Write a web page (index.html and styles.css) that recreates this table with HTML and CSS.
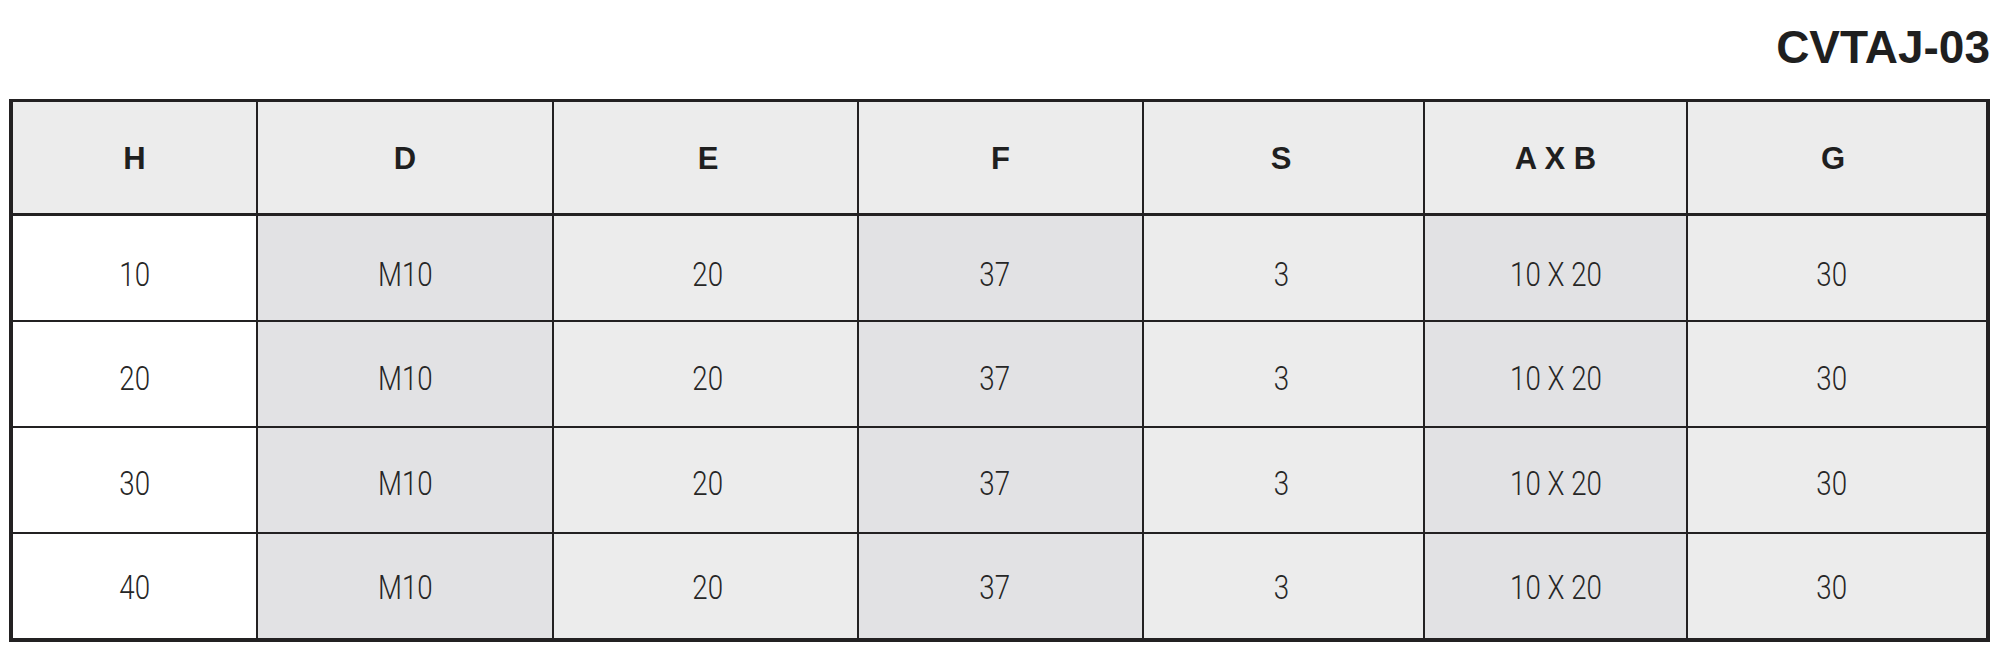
FILE: index.html
```html
<!DOCTYPE html>
<html lang="en">
<head>
<meta charset="utf-8">
<title>CVTAJ-03</title>
<link rel="stylesheet" href="styles.css">
</head>
<body>
<div class="sheet">
  <h1 class="code">CVTAJ-03</h1>
  <div class="spec">
    <div class="row head">
      <div class="hcell">H</div>
      <div class="hcell">D</div>
      <div class="hcell">E</div>
      <div class="hcell">F</div>
      <div class="hcell">S</div>
      <div class="hcell">A X B</div>
      <div class="hcell">G</div>
    </div>

    <div class="row r1">
      <div class="cell white"><span class="val">10</span></div>
      <div class="cell dark"><span class="val">M10</span></div>
      <div class="cell"><span class="val">20</span></div>
      <div class="cell dark"><span class="val">37</span></div>
      <div class="cell"><span class="val">3</span></div>
      <div class="cell dark"><span class="val">10 X 20</span></div>
      <div class="cell"><span class="val">30</span></div>
    </div>

    <div class="row r2">
      <div class="cell white"><span class="val">20</span></div>
      <div class="cell dark"><span class="val">M10</span></div>
      <div class="cell"><span class="val">20</span></div>
      <div class="cell dark"><span class="val">37</span></div>
      <div class="cell"><span class="val">3</span></div>
      <div class="cell dark"><span class="val">10 X 20</span></div>
      <div class="cell"><span class="val">30</span></div>
    </div>

    <div class="row r3">
      <div class="cell white"><span class="val">30</span></div>
      <div class="cell dark"><span class="val">M10</span></div>
      <div class="cell"><span class="val">20</span></div>
      <div class="cell dark"><span class="val">37</span></div>
      <div class="cell"><span class="val">3</span></div>
      <div class="cell dark"><span class="val">10 X 20</span></div>
      <div class="cell"><span class="val">30</span></div>
    </div>

    <div class="row r4">
      <div class="cell white"><span class="val">40</span></div>
      <div class="cell dark"><span class="val">M10</span></div>
      <div class="cell"><span class="val">20</span></div>
      <div class="cell dark"><span class="val">37</span></div>
      <div class="cell"><span class="val">3</span></div>
      <div class="cell dark"><span class="val">10 X 20</span></div>
      <div class="cell"><span class="val">30</span></div>
    </div>
  </div>
</div>
</body>
</html>
```

FILE: styles.css
```css
html, body {
  margin: 0;
  padding: 0;
  background: #ffffff;
}

body {
  padding: 22px 11px 0 9px;
  font-family: "Liberation Sans", Arial, sans-serif;
  color: #1f1f1f;
}

.sheet {
  width: 1981px;
}

.code {
  margin: 0 0 27px 0;
  font-family: "Liberation Sans", Arial, sans-serif;
  font-weight: 700;
  font-size: 46px;
  line-height: 50px;
  text-align: right;
  color: #1f1f1f;
}

.spec {
  display: grid;
  grid-template-columns: 243px 294px 303px 283px 279px 261px 298px;
  grid-template-rows: 112px repeat(4, 104px);
  gap: 2px;
  background: #232122;
  border: 4px solid #232122;
  border-top-width: 3px;
}

.row {
  display: contents;
}

.hcell {
  box-sizing: border-box;
  display: flex;
  align-items: center;
  justify-content: center;
  padding-top: 1px;
  background: #ececec;
  border-bottom: 1px solid #232122;
  font-family: "Liberation Sans", Arial, sans-serif;
  font-weight: 700;
  font-size: 31px;
  line-height: 1;
  color: #1f1f1f;
}

.cell {
  box-sizing: border-box;
  display: flex;
  align-items: center;
  justify-content: center;
  padding-top: 13px;
  background: #ececec;
  font-family: Roboto, "Liberation Sans", sans-serif;
  font-weight: 300;
  font-size: 33.75px;
  line-height: 1;
  color: #262626;
}

.r2 .cell { padding-top: 10px; }
.r3 .cell { padding-top: 7px; }
.r4 .cell { padding-top: 4px; }

/* small per-column optical offsets */
.row > :nth-child(3) { padding-left: 5px; }
.row > :nth-child(5) { padding-right: 5px; }
.head > :nth-child(7) { padding-right: 8px; }
.row .cell:nth-child(4) { padding-right: 12px; }
.row .cell:nth-child(7) { padding-right: 10px; }

.cell.white {
  background: #ffffff;
}

.cell.dark {
  background: #e2e2e4;
}

.val {
  display: inline-block;
  white-space: nowrap;
  transform: scaleX(0.82);
  transform-origin: center;
}
```
